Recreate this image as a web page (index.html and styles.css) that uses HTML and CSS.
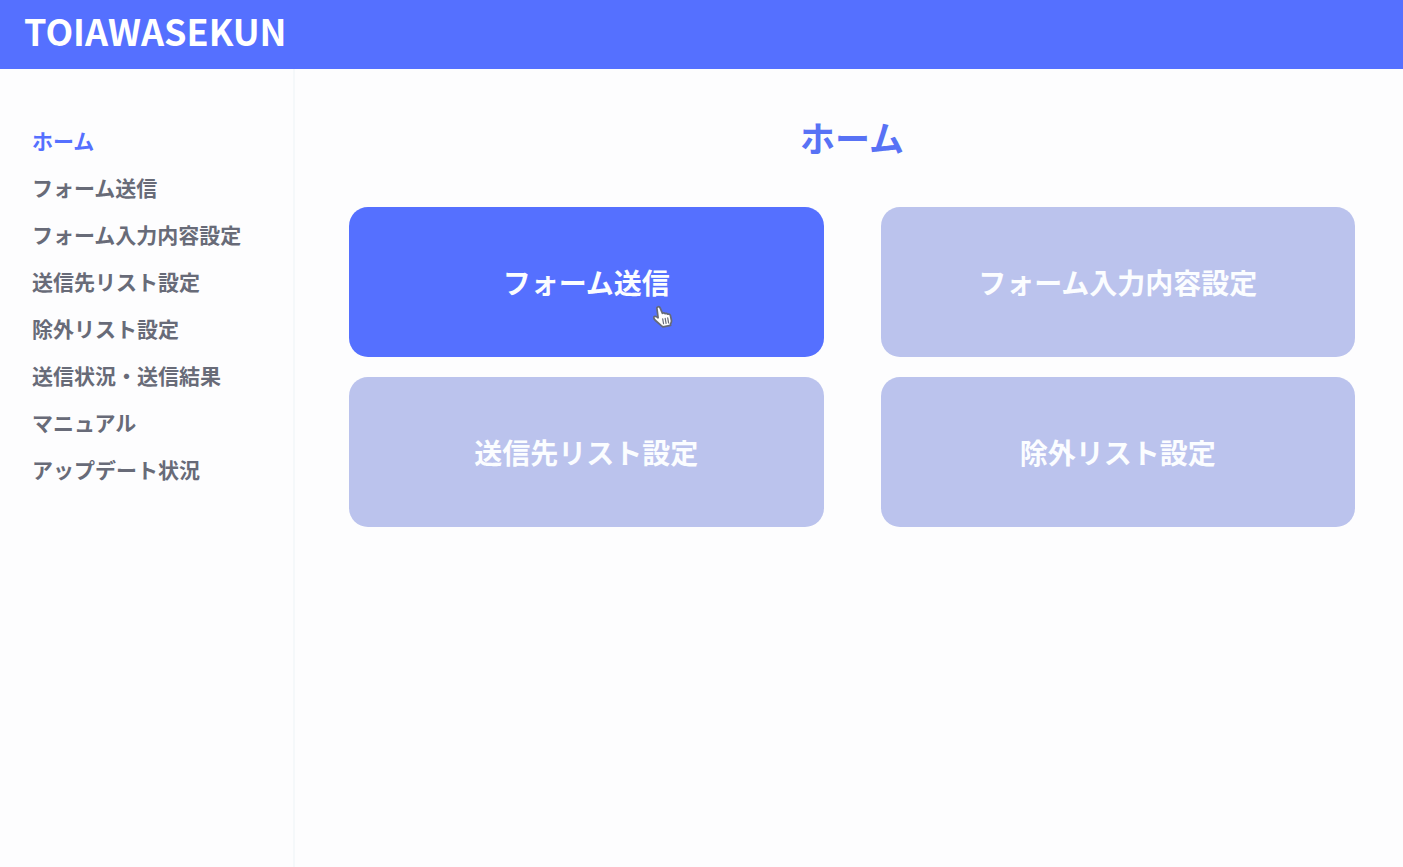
FILE: index.html
```html
<!DOCTYPE html>
<html lang="ja">
<head>
<meta charset="utf-8">
<meta name="viewport" content="width=device-width, initial-scale=1">
<title>TOIAWASEKUN</title>
<link rel="stylesheet" href="styles.css">
</head>
<body>
<header class="header"><a class="logo" href="#">TOIAWASEKUN</a></header>
<div class="layout">
  <nav class="sidebar" aria-label="メニュー">
    <ul class="menu">
      <li><a class="menu-link active" href="#" aria-current="page">ホーム</a></li>
      <li><a class="menu-link" href="#">フォーム送信</a></li>
      <li><a class="menu-link" href="#">フォーム入力内容設定</a></li>
      <li><a class="menu-link" href="#">送信先リスト設定</a></li>
      <li><a class="menu-link" href="#">除外リスト設定</a></li>
      <li><a class="menu-link" href="#">送信状況・送信結果</a></li>
      <li><a class="menu-link" href="#">マニュアル</a></li>
      <li><a class="menu-link" href="#">アップデート状況</a></li>
    </ul>
  </nav>
  <main class="main">
    <h1 class="title">ホーム</h1>
    <div class="cards">
      <a class="card hovered" href="#">フォーム送信
        <svg class="pointer" viewBox="0 0 20 22" width="22" height="24" aria-hidden="true">
          <path d="M4.200 1.800c.8-.5 1.800-.1 2.200.8l2.200 5c.8-.5 1.800-.3 2.400.3.900-.4 1.900-.1 2.400.5 1.100-.3 2.200.2 2.500 1.300l.9 4.300c.2 1.300-.1 2.400-.9 3.300l.2 1.400-6.900 1.400-1.700-1.200-5.300-4.700c-1.700-1.500-2-3.200-1-3.700 1-.5 2.200.1 3.400 1.200L3.600 3.700c-.3-.7-.1-1.500.6-1.900Z" fill="#fff" stroke="#666a78" stroke-width="1.600" stroke-linejoin="round"/>
          <path d="m8.800 12.600.8 4.600M11.100 12.200l.8 4.600M13.400 11.800l.8 4.600" fill="none" stroke="#666a78" stroke-width="1.100" stroke-linecap="round"/>
        </svg>
      </a>
      <a class="card" href="#">フォーム入力内容設定</a>
      <a class="card" href="#">送信先リスト設定</a>
      <a class="card" href="#">除外リスト設定</a>
    </div>
  </main>
</div>
</body>
</html>
```
FILE: styles.css
```css
* { box-sizing: border-box; }
body {
  margin: 0;
  min-height: 100vh;
  display: flex;
  flex-direction: column;
  background: #fdfdfe;
  color: #686b78;
  font-family: "Noto Sans CJK JP", sans-serif;
  font-weight: 700;
}
a { color: inherit; text-decoration: none; }
.header {
  padding: 6px 24px 15px;
  background: #5570ff;
  color: #fff;
}
.logo {
  display: block;
  width: max-content;
  font-size: 36px;
  line-height: 48px;
}
.layout { display: flex; flex: 1; }
.sidebar {
  flex: 0 0 295px;
  padding: 48px 16px 48px 32px;
  border-right: 2px solid #f5f8fa;
}
.menu { margin: 0; padding: 0; list-style: none; }
.menu-link {
  display: block;
  font-size: 21px;
  line-height: 47px;
  white-space: nowrap;
}
.active { color: #5570ff; }
.main { flex: 1; padding: 42px 48px 48px 54px; }
.title {
  margin: 0 0 44px;
  color: #5872f5;
  font-size: 35px;
  line-height: 52px;
  text-align: center;
}
.cards {
  display: grid;
  grid-template-columns: 1fr 1fr;
  gap: 20px 57px;
}
.card {
  position: relative;
  display: flex;
  align-items: center;
  justify-content: center;
  min-height: 150px;
  border-radius: 19px;
  background: #bbc3ed;
  color: #fbfdff;
  font-size: 28px;
  line-height: 40px;
}
.hovered { background: #5570ff; }
.pointer { position: absolute; top: 98px; left: 64%; }
```
